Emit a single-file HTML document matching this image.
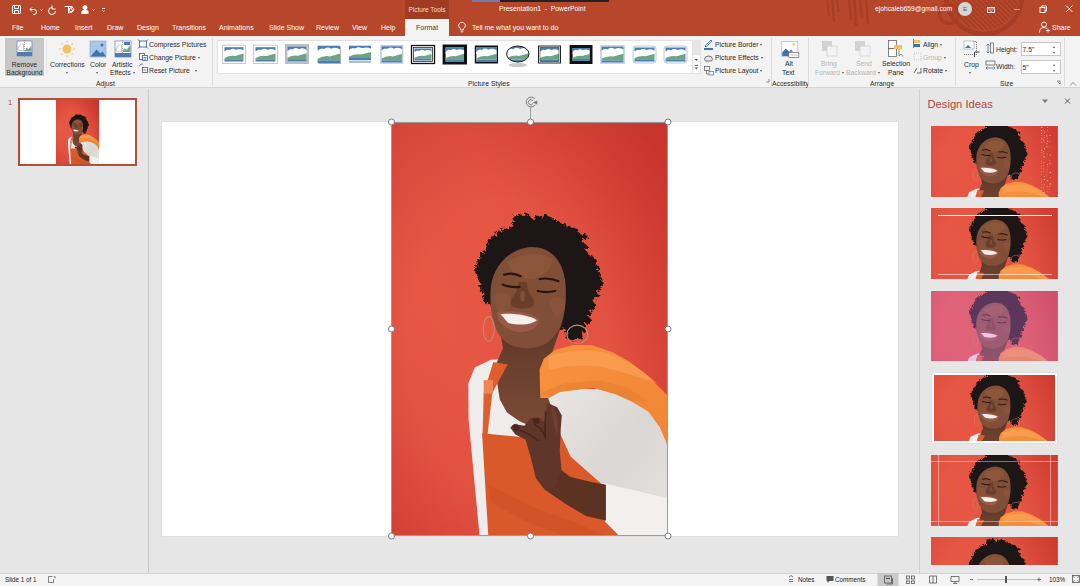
<!DOCTYPE html>
<html><head><meta charset="utf-8">
<style>
*{margin:0;padding:0;box-sizing:border-box}
html,body{width:1080px;height:586px;overflow:hidden;background:#E6E6E6;font-family:"Liberation Sans",sans-serif;font-size:7px;color:#262626}
.a{position:absolute}
.t{position:absolute;white-space:nowrap;line-height:1}
#title{left:0;top:0;width:1080px;height:36px;background:#B7472A}
#ribbon{left:0;top:36px;width:1080px;height:52px;background:#F3F3F3;border-bottom:1px solid #D5D5D5}
.tab{color:#fff;top:24px}
.rl{color:#2A2A2A;font-size:6.8px;margin-top:1px}
.sep{position:absolute;width:1px;background:#DADADA}
#status{left:0;top:573px;width:1080px;height:13px;background:#F3F3F3;border-top:1px solid #D4D4D4}
.dd{display:inline-block;width:0;height:0;border-left:1.6px solid transparent;border-right:1.6px solid transparent;border-top:2px solid #555;vertical-align:1px}
.du{display:inline-block;width:0;height:0;border-left:1.6px solid transparent;border-right:1.6px solid transparent;border-bottom:2px solid #555;vertical-align:1px}
</style></head><body>
<svg width="0" height="0" style="position:absolute">
<defs>
<radialGradient id="bg" cx="0.3" cy="0.5" r="0.85">
<stop offset="0" stop-color="#E95A47"/>
<stop offset="0.5" stop-color="#E14F3E"/>
<stop offset="1" stop-color="#C9382C"/>
</radialGradient>
<linearGradient id="bgr" x1="0" y1="1" x2="1" y2="0">
<stop offset="0" stop-color="#B01A1A" stop-opacity="0.15"/>
<stop offset="0.35" stop-color="#B01A1A" stop-opacity="0"/>
<stop offset="0.62" stop-color="#B01A1A" stop-opacity="0"/>
<stop offset="1" stop-color="#B01A1A" stop-opacity="0.3"/>
</linearGradient>
<filter id="fuzz" x="-10%" y="-10%" width="120%" height="120%">
<feTurbulence type="fractalNoise" baseFrequency="0.09" numOctaves="2" seed="4"/>
<feDisplacementMap in="SourceGraphic" scale="22"/>
</filter>
<radialGradient id="vig" cx="0.42" cy="0.55" r="0.72">
<stop offset="0.5" stop-color="#A81818" stop-opacity="0"/>
<stop offset="1" stop-color="#A81818" stop-opacity="0.3"/>
</radialGradient>
<linearGradient id="sleeve" x1="0" y1="0" x2="1" y2="1">
<stop offset="0" stop-color="#E9E7E5"/>
<stop offset="0.5" stop-color="#D9D6D3"/>
<stop offset="1" stop-color="#E6E4E2"/>
</linearGradient>
<linearGradient id="jacket" x1="0" y1="0" x2="1" y2="1">
<stop offset="0" stop-color="#F8923E"/>
<stop offset="1" stop-color="#F08434"/>
</linearGradient>
<linearGradient id="neck" x1="0" y1="0" x2="0" y2="1">
<stop offset="0" stop-color="#4F2C20"/>
<stop offset="0.4" stop-color="#683E2D"/>
<stop offset="1" stop-color="#7E4D38"/>
</linearGradient>
<g id="photo">
<rect x="-400" y="-400" width="1077" height="1214" fill="url(#bg)"/>
<rect x="0" y="0" width="277" height="414" fill="url(#bgr)"/>
<rect x="0" y="0" width="277" height="414" fill="url(#vig)"/>
<g transform="translate(59,78) scale(0.27315)">
<g fill="#1C1513" filter="url(#fuzz)"><polygon points="150,385 128,350 110,300 100,265 108,230 120,200 140,175 148,150 175,125 200,110 225,95 240,70 260,55 290,75 320,65 345,60 375,75 400,80 430,105 465,115 488,130 480,160 505,195 530,230 545,270 548,310 535,350 520,385 505,420 490,460 480,500 450,510 420,470 300,480 200,480"/><circle cx="148" cy="381" r="6"/><circle cx="134" cy="368" r="11"/><circle cx="129" cy="355" r="9"/><circle cx="116" cy="333" r="7"/><circle cx="113" cy="317" r="6"/><circle cx="114" cy="295" r="9"/><circle cx="107" cy="283" r="6"/><circle cx="101" cy="264" r="9"/><circle cx="99" cy="252" r="10"/><circle cx="107" cy="230" r="10"/><circle cx="115" cy="217" r="7"/><circle cx="121" cy="202" r="11"/><circle cx="125" cy="190" r="6"/><circle cx="141" cy="175" r="12"/><circle cx="151" cy="150" r="13"/><circle cx="160" cy="134" r="8"/><circle cx="177" cy="122" r="10"/><circle cx="200" cy="115" r="13"/><circle cx="222" cy="101" r="7"/><circle cx="240" cy="66" r="11"/><circle cx="256" cy="55" r="6"/><circle cx="281" cy="60" r="11"/><circle cx="288" cy="73" r="13"/><circle cx="321" cy="64" r="7"/><circle cx="350" cy="60" r="7"/><circle cx="355" cy="70" r="13"/><circle cx="372" cy="74" r="11"/><circle cx="394" cy="80" r="8"/><circle cx="416" cy="92" r="9"/><circle cx="433" cy="101" r="9"/><circle cx="446" cy="115" r="13"/><circle cx="460" cy="114" r="10"/><circle cx="493" cy="134" r="10"/><circle cx="482" cy="166" r="12"/><circle cx="498" cy="173" r="8"/><circle cx="501" cy="197" r="6"/><circle cx="517" cy="214" r="10"/><circle cx="527" cy="226" r="11"/><circle cx="539" cy="248" r="8"/><circle cx="547" cy="270" r="6"/><circle cx="546" cy="294" r="12"/><circle cx="547" cy="309" r="13"/><circle cx="543" cy="325" r="7"/><circle cx="541" cy="349" r="7"/><circle cx="526" cy="362" r="6"/><circle cx="521" cy="385" r="11"/><circle cx="514" cy="397" r="9"/><circle cx="506" cy="416" r="10"/><circle cx="503" cy="441" r="13"/><circle cx="485" cy="464" r="13"/><circle cx="485" cy="478" r="8"/><circle cx="475" cy="498" r="10"/><circle cx="450" cy="512" r="6"/><circle cx="436" cy="502" r="11"/><circle cx="426" cy="484" r="6"/></g>
</g>
<g transform="translate(64,208) scale(0.35833)">
<path fill="#EEEDEC" d="M70,590 L52,400 L38,250 L37,150 L55,105 L100,83 L160,80 L260,80 L260,590 Z"/>
<path fill="url(#neck)" d="M125,-80 L296,-80 L300,-22 L262,89 L296,257 L282,300 L215,270 L180,255 L145,230 L125,194 L117,143 L114,97 L134,51 L125,0 Z"/>
<path fill="#DE5E2E" d="M107,89 L147,96 L104,176 L91,290 L77,290 L80,176 Z"/>
<rect x="80" y="140" width="26" height="38" fill="#EE8558"/>
<path fill="url(#sleeve)" d="M255,175 L350,165 L450,165 L540,220 L590,280 L600,320 L600,590 L400,590 L405,530 L420,470 L350,420 L305,335 L285,260 Z"/>
<path fill="url(#jacket)" d="M238,190 L236,110 L248,80 L280,55 L330,42 L380,42 L440,62 L490,90 L540,130 L575,165 L600,190 L600,350 L592,320 L572,272 L540,228 L490,198 L450,180 L385,161 L330,168 L293,173 L262,190 Z"/>
<path fill="#FBAA60" opacity="0.5" d="M260,75 Q330,48 420,62 Q500,88 565,150 Q480,118 400,102 Q320,94 262,112 Z"/>
<path fill="#D8702A" opacity="0.3" d="M240,175 L300,150 L400,140 L480,160 L540,200 L490,198 L450,180 L385,161 L330,168 L293,173 L262,190 Z"/>
</g>
<g transform="translate(0,278) scale(0.25647)">
<path fill="#D9592B" d="M355,130 L520,145 L650,110 L700,220 L830,335 L835,470 L900,540 L380,540 Z"/>
<path fill="#C24A22" opacity="0.35" d="M380,330 L560,420 L700,470 L860,540 L700,540 L520,470 L390,400 Z"/>
<path fill="#F1F0EE" d="M830,325 L960,355 L1085,385 L1085,545 L905,545 L835,475 Z"/>
<path fill="#5C3222" d="M660,270 L700,300 L780,320 L838,330 L838,470 L760,452 L680,405 L600,350 L565,300 Z"/>
<path fill="#61362A" d="M610,12 L648,28 L666,60 L662,110 L658,200 L665,275 L640,340 L600,350 L565,305 L545,225 L525,155 L485,135 L465,108 L480,94 L520,100 L545,70 L578,68 L600,88 L603,40 Z"/>
<path fill="#3A1E16" opacity="0.6" d="M470,100 L490,92 L505,110 L485,125 Z M550,72 L575,70 L580,90 L558,95 Z"/>
<path fill="none" stroke="#3A1E16" stroke-width="6" opacity="0.7" d="M603,45 Q598,95 602,150 M500,118 Q540,130 575,160 M560,95 Q590,110 600,140"/>
<path fill="#7A4A36" opacity="0.5" d="M625,30 Q645,40 650,80 L648,140 Q635,100 628,60 Z"/>
</g>
<g transform="translate(59,78) scale(0.27315)">
<path fill="#814E38" d="M148,340 C150,250 210,178 298,172 C382,172 424,240 424,330 C426,420 408,485 360,520 C322,548 252,552 207,522 C165,492 146,425 148,340 Z"/>
<path fill="#98623F" opacity="0.45" d="M210,225 Q300,175 375,215 Q370,270 300,290 Q230,290 210,225 Z"/>
<path fill="#935A40" opacity="0.4" d="M160,350 Q190,330 220,350 Q230,400 195,425 Q165,410 160,350 Z M365,365 Q395,345 422,365 Q425,410 395,430 Q365,410 365,365 Z"/>
<path fill="#5E3424" opacity="0.6" d="M250,300 Q246,340 226,360 Q212,386 240,394 Q266,402 292,394 Q316,386 304,360 Q284,340 280,300 Z"/>
<ellipse cx="266" cy="352" rx="9" ry="20" fill="#A06548" opacity="0.45"/>
<path fill="#9A5A48" d="M172,410 C230,402 292,410 328,436 C315,492 230,505 178,442 Z"/>
<path fill="#F4F0EA" d="M185,418 C230,414 285,420 318,440 C300,455 258,462 213,450 Z"/>
<path fill="none" stroke="#2A1510" stroke-width="8" d="M190,308 Q222,322 258,318 M318,332 Q352,342 388,332 M195,275 Q225,262 262,280 M325,290 Q360,282 400,298"/>
<ellipse cx="142" cy="472" rx="20" ry="45" fill="none" stroke="#B8906E" stroke-width="4"/>
<ellipse cx="466" cy="492" rx="38" ry="34" fill="none" stroke="#B8906E" stroke-width="4"/>
</g>
</g>
</defs>
</svg>
<div id="title" class="a">
<svg class="a" style="left:0;top:0" width="1080" height="36">
<defs><clipPath id="ringclip"><circle cx="984" cy="-4" r="34"/></clipPath></defs>
<g fill="#A63D24"><path d="M826,0 l2,0 l2,16 l-2,0 z"/><path d="M831,0 l2,0 l2,22 l-2,0 z"/><path d="M836,0 l1.8,0 l2,12 l-1.8,0 z"/><path d="M848,0 l2.2,0 l2,20 l-2.2,0 z"/><path d="M853,0 l2.5,0 l2,26 l-2.5,0 z"/><path d="M859,0 l2,0 l2,18 l-2,0 z"/><path d="M865,0 l2,0 l2,24 l-2,0 z"/></g>
<g fill="none" stroke="#A63D24">
<circle cx="984" cy="-4" r="38" stroke-width="4.5"/>
<circle cx="949" cy="14" r="9.5" stroke-width="3"/>
<path d="M894,-44 l80,80 M899,-44 l80,80 M904,-44 l80,80 M909,-44 l80,80 M914,-44 l80,80 M919,-44 l80,80 M924,-44 l80,80 M929,-44 l80,80 M934,-44 l80,80 M939,-44 l80,80 M944,-44 l80,80 M949,-44 l80,80 M954,-44 l80,80 M959,-44 l80,80 M964,-44 l80,80 M969,-44 l80,80 M974,-44 l80,80 M979,-44 l80,80 M984,-44 l80,80 M989,-44 l80,80 M994,-44 l80,80 " stroke-width="1.6" clip-path="url(#ringclip)"/>
</g>
</svg>
<div class="a" style="left:472px;top:0;width:28px;height:1.5px;background:#6D7FA8"></div>
<div class="a" style="left:500px;top:0;width:109px;height:1.5px;background:#222"></div>
<!-- QAT icons -->
<svg class="a" style="left:10px;top:4px" width="110" height="11" fill="none" stroke="#fff" stroke-width="1">
<rect x="2.5" y="1.5" width="8" height="8" rx="0.5"/>
<path d="M4.5,1.5 v3 h4 v-3 M4.5,9.5 v-3 h4 v3"/>
<path d="M22,3.5 l-2,2 l2,2 M20,5.5 h4 a2.5,2.5 0 0 1 0,5 h-1"/>
<path d="M30.5,5.5 l1,1 l1,-1" stroke-width="0.8"/>
<path d="M42,3.5 a3.5,3.5 0 1 0 3.5,3.5 M42,1.5 v3.5 h3.5" />
<path d="M54.5,2.5 h8 M58.5,2.5 v7 M59.5,5.5 a2.2,2.2 0 1 1 0,0.1"/>
<circle cx="60.5" cy="6.5" r="2"/>
<circle cx="75" cy="3.5" r="2" fill="#fff"/>
<path d="M72,10 v-3 q3,-2 6,0 v3" fill="#fff"/>
<path d="M82.5,5.5 l1,1 l1,-1" stroke-width="0.8"/>
<path d="M92,4.5 h3 M92.5,6.5 l1,1 l1,-1" stroke-width="0.8"/>
</svg>
<div class="a" style="left:405px;top:0;width:44px;height:19px;background:#A03C23"></div>
<div class="t" style="left:405px;top:6.8px;width:44px;text-align:center;color:#F3DDD6;font-size:6.5px">Picture Tools</div>
<div class="t" style="left:499px;top:6.3px;color:#fff;font-size:6.8px">Presentation1&nbsp; -&nbsp; PowerPoint</div>
<div class="t" style="left:875px;top:6px;color:#fff;font-size:6.7px">ejohcaleb659@gmail.com</div>
<div class="a" style="left:958px;top:2px;width:14px;height:14px;border-radius:50%;background:#D6D6D6"></div>
<div class="t" style="left:963px;top:6px;color:#555;font-size:6px">E</div>
<svg class="a" style="left:980px;top:2px" width="100" height="34" fill="none" stroke="#fff" stroke-width="0.9">
<rect x="7.5" y="5.5" width="7" height="5"/>
<path d="M7.5,7 h7 M9.5,8.5 l1.5,1 l1.5,-1" stroke-width="0.7"/>
<path d="M34,7.5 h6" stroke="#E8B8A8" stroke-width="0.7"/>
<rect x="60" y="5.5" width="5" height="5"/>
<path d="M61.5,5.5 v-1.5 h5 v5 h-1.5"/>
<path d="M86,3.5 l6.5,6.5 M92.5,3.5 l-6.5,6.5"/>
<circle cx="64" cy="22.5" r="2.5"/>
<path d="M59.5,30.5 q0,-5 4.5,-5 q2,0 3,1 M66,28.5 h4 M68,26.5 v4"/>
</svg>
<div class="t" style="left:1052px;top:24px;color:#fff;font-size:7px">Share</div>
<!-- tabs -->
<div class="t tab" style="left:12px">File</div>
<div class="t tab" style="left:41px">Home</div>
<div class="t tab" style="left:75px">Insert</div>
<div class="t tab" style="left:107px">Draw</div>
<div class="t tab" style="left:137px">Design</div>
<div class="t tab" style="left:172px">Transitions</div>
<div class="t tab" style="left:219px">Animations</div>
<div class="t tab" style="left:269px">Slide Show</div>
<div class="t tab" style="left:316px">Review</div>
<div class="t tab" style="left:352px">View</div>
<div class="t tab" style="left:381px">Help</div>
<div class="a" style="left:405px;top:19px;width:44px;height:18px;background:#F3F3F3"></div>
<div class="t" style="left:416px;top:24px;color:#3A3A3A">Format</div>
<svg class="a" style="left:457px;top:22px" width="10" height="11" fill="none" stroke="#fff" stroke-width="0.9">
<path d="M3.5,8 v-1.5 a3.3,3.3 0 1 1 3,0 v1.5 z M3.8,9.8 h2.4"/>
</svg>
<div class="t tab" style="left:472px">Tell me what you want to do</div>
</div>
<div id="ribbon" class="a"></div>
<!-- Adjust group -->
<div class="sep" style="left:46px;top:40px;height:34px;background:#E4E4E4"></div>
<div class="a" style="left:5px;top:38px;width:39px;height:38px;background:#C6C6C6"></div>
<svg class="a" style="left:0;top:36px" width="212" height="52">
<g>
<rect x="17" y="5" width="15" height="15" fill="#fff" stroke="#6B8FBF" stroke-width="0.8"/>
<rect x="17" y="16" width="15" height="4" fill="#4C7DB4"/>
<path d="M17.5,14 q2,-7 6,-6 v7 z" fill="#fff" stroke="#888" stroke-width="0.5"/>
<path d="M24.5,15.5 l2,-4 l2,2 l3,-4 v6 z" fill="#6FA386"/>
<path d="M24.5,4 v17" stroke="#777" stroke-width="0.6" stroke-dasharray="1,1"/>
</g>
<g fill="#F2C261">
<circle cx="67" cy="13" r="4.5"/>
<g stroke="#F2C261" stroke-width="1.3" stroke-linecap="round">
<path d="M67,5.5 v0.5 M67,20 v0.5 M59.5,13 h0.5 M74,13 h0.5 M61.7,7.7 l0.3,0.3 M72,18 l0.3,0.3 M61.7,18.3 l0.3,-0.3 M72,8 l0.3,-0.3"/>
</g>
</g>
<g>
<rect x="90" y="5" width="16" height="16" fill="#A9C6E8" stroke="#7FA3CF" stroke-width="0.6"/>
<path d="M90.5,20.5 l6,-7 l4,4 l2,-2 l3.5,5 z" fill="#3F73B0"/>
<circle cx="102" cy="9" r="1.5" fill="#3F73B0"/>
</g>
<g>
<rect x="115" y="5" width="16" height="16" fill="#fff" stroke="#6B8FBF" stroke-width="0.8"/>
<rect x="115" y="17" width="16" height="4" fill="#4C7DB4"/>
<path d="M115.5,15 q2,-7 6,-6 v7 z" fill="#fff" stroke="#888" stroke-width="0.5"/>
<path d="M122.5,16 l2,-4 l2,2 l4,-5 v7 z" fill="#6FA386"/>
<rect x="124" y="6" width="6" height="3" fill="#4C7DB4"/>
<path d="M122.5,4 v18" stroke="#777" stroke-width="0.6" stroke-dasharray="1,1"/>
</g>
<g fill="none" stroke="#3A5F8F" stroke-width="0.8">
<rect x="139.5" y="5" width="7" height="6"/>
<path d="M138,3.5 l2,2 M148,3.5 l-2,2 M138,12.5 l2,-2 M148,12.5 l-2,-2"/>
<rect x="139.5" y="17.5" width="5" height="6" stroke="#555"/>
<rect x="142.5" y="19.5" width="5" height="5" fill="#fff"/>
<path d="M143.5,21.5 h3 M143.5,23 h3" stroke="#3F73B0"/>
<path d="M139.5,30 q0,-2 2.5,-2 h1" stroke="#3F73B0"/>
<rect x="142.5" y="31.5" width="5" height="5" fill="#fff" stroke="#555"/>
<path d="M143.5,34 h3"/>
</g>
</svg>
<div class="t rl" style="left:5px;top:60.5px;width:39px;text-align:center">Remove</div>
<div class="t rl" style="left:3px;top:68.5px;width:43px;text-align:center">Background</div>
<div class="t rl" style="left:50px;top:60.5px">Corrections</div>
<div class="t rl" style="left:65.5px;top:69px"><i class="dd"></i></div>
<div class="t rl" style="left:90px;top:60.5px">Color</div>
<div class="t rl" style="left:96px;top:69px"><i class="dd"></i></div>
<div class="t rl" style="left:112px;top:60.5px">Artistic</div>
<div class="t rl" style="left:110px;top:68.5px">Effects <i class="dd"></i></div>
<div class="t rl" style="left:149px;top:40.5px">Compress Pictures</div>
<div class="t rl" style="left:149px;top:53.5px">Change Picture <i class="dd"></i></div>
<div class="t rl" style="left:149px;top:66.5px">Reset Picture&nbsp;&nbsp; <i class="dd"></i></div>
<div class="t rl" style="left:96px;top:80px">Adjust</div>
<div class="sep" style="left:212px;top:38px;height:48px"></div>
<!-- Picture styles -->
<div class="a" style="left:217px;top:39.5px;width:484px;height:34px;background:#FFFFFF;border:1px solid #E1E1E1"></div>
<div class="a" style="left:692px;top:40px;width:8.5px;height:15px;background:#E6E6E6"></div>
<div class="a" style="left:692px;top:40px;width:1px;height:33px;background:#E1E1E1"></div>
<svg class="a" style="left:692px;top:39px" width="10" height="36"><path d="M2.6,20 h3.4 l-1.7,2 z" fill="#555"/><path d="M2.6,26.5 h3.4" stroke="#555" stroke-width="0.8"/><path d="M2.6,28.5 h3.4 l-1.7,2 z" fill="#555"/><path d="M0.5,16 h8 M0.5,25 h8" stroke="#E4E4E4" stroke-width="0.6"/></svg>

<svg class="a" style="left:0;top:0" width="1080" height="90"><rect x="222.5" y="45.2" width="23" height="18.299999999999997" fill="#fff" stroke="#C8C8C8"/><g><rect x="224.5" y="47.2" width="19.0" height="14.299999999999997" fill="#FFFFFF"/><rect x="224.5" y="47.2" width="19.0" height="4.0" fill="#4C7DB4"/><path d="M224.5,52.1 Q226.8,48.3 229.8,50.1 Q232.5,47.5 235.9,49.8 Q239.7,47.8 243.5,50.3 L243.5,53.6 L224.5,53.6 Z" fill="#fff"/><path d="M224.5,57.9 Q230.2,55.1 234.9,56.1 L243.5,53.6 L243.5,59.4 L224.5,59.4 Z" fill="#6FA386"/><rect x="224.5" y="59.4" width="19.0" height="2.1" fill="#4C7DB4"/></g><rect x="253.5" y="45.2" width="24" height="18.299999999999997" fill="#fff" stroke="#C8C8C8"/><g><rect x="255.5" y="47.2" width="20.0" height="14.299999999999997" fill="#FFFFFF"/><rect x="255.5" y="47.2" width="20.0" height="4.0" fill="#4C7DB4"/><path d="M255.5,52.1 Q257.9,48.3 261.1,50.1 Q263.9,47.5 267.5,49.8 Q271.5,47.8 275.5,50.3 L275.5,53.6 L255.5,53.6 Z" fill="#fff"/><path d="M255.5,57.9 Q261.5,55.1 266.5,56.1 L275.5,53.6 L275.5,59.4 L255.5,59.4 Z" fill="#6FA386"/><rect x="255.5" y="59.4" width="20.0" height="2.1" fill="#4C7DB4"/></g><rect x="285" y="44" width="24" height="20" fill="#BEBEBE"/><g><rect x="287.5" y="46.5" width="19.0" height="15.0" fill="#FFFFFF"/><rect x="287.5" y="46.5" width="19.0" height="4.2" fill="#4C7DB4"/><path d="M287.5,51.6 Q289.8,47.7 292.8,49.5 Q295.5,46.7 298.9,49.2 Q302.7,47.0 306.5,49.8 L306.5,53.3 L287.5,53.3 Z" fill="#fff"/><path d="M287.5,57.8 Q293.2,54.8 297.9,55.8 L306.5,53.2 L306.5,59.2 L287.5,59.2 Z" fill="#6FA386"/><rect x="287.5" y="59.2" width="19.0" height="2.2" fill="#4C7DB4"/></g><rect x="318.6" y="46.7" width="22.399999999999977" height="17.299999999999997" fill="#B0B0B0"/><g><rect x="317.6" y="45.7" width="22.399999999999977" height="17.299999999999997" fill="#FFFFFF"/><rect x="317.6" y="45.7" width="22.399999999999977" height="4.8" fill="#4C7DB4"/><path d="M317.6,51.5 Q320.3,47.1 323.9,49.1 Q327.1,46.1 331.1,48.8 Q335.6,46.4 340.1,49.5 L340.1,53.4 L317.6,53.4 Z" fill="#fff"/><path d="M317.6,58.7 Q324.3,55.2 329.9,56.4 L340,53.5 L340,60.4 L317.6,60.4 Z" fill="#6FA386"/><rect x="317.6" y="60.4" width="22.399999999999977" height="2.6" fill="#4C7DB4"/></g><g><rect x="349" y="45.7" width="22" height="14.299999999999997" fill="#FFFFFF"/><rect x="349" y="45.7" width="22" height="4.0" fill="#4C7DB4"/><path d="M349.0,50.6 Q351.6,46.8 355.2,48.6 Q358.2,46.0 362.2,48.3 Q366.6,46.3 371.0,48.8 L371.0,52.1 L349.0,52.1 Z" fill="#fff"/><path d="M349,56.4 Q355.6,53.6 361.1,54.6 L371,52.1 L371,57.9 L349,57.9 Z" fill="#6FA386"/><rect x="349" y="57.9" width="22" height="2.1" fill="#4C7DB4"/></g><rect x="349" y="60.5" width="22" height="2.5" fill="#A9BFD9"/><g><rect x="381" y="45.7" width="21.600000000000023" height="17.299999999999997" fill="#FFFFFF"/><rect x="381" y="45.7" width="21.600000000000023" height="4.8" fill="#4C7DB4"/><path d="M381.0,51.5 Q383.6,47.1 387.0,49.1 Q390.0,46.1 393.9,48.8 Q398.2,46.4 402.5,49.5 L402.5,53.4 L381.0,53.4 Z" fill="#fff"/><path d="M381,58.7 Q387.5,55.2 392.9,56.4 L402.6,53.5 L402.6,60.4 L381,60.4 Z" fill="#6FA386"/><rect x="381" y="60.4" width="21.600000000000023" height="2.6" fill="#4C7DB4"/></g><rect x="381" y="45.7" width="21.600000000000023" height="17.299999999999997" fill="none" stroke="#B8CBE0" stroke-width="1.5"/><rect x="411.5" y="45.5" width="23" height="18" fill="#fff" stroke="#111" stroke-width="1.3"/><rect x="413.5" y="47.5" width="19" height="14" fill="#fff" stroke="#111" stroke-width="0.7"/><g><rect x="414.5" y="48.5" width="17.0" height="12.0" fill="#FFFFFF"/><rect x="414.5" y="48.5" width="17.0" height="3.4" fill="#4C7DB4"/><path d="M414.5,52.6 Q416.5,49.5 419.3,50.9 Q421.6,48.7 424.7,50.7 Q428.1,49.0 431.5,51.2 L431.5,54.0 L414.5,54.0 Z" fill="#fff"/><path d="M414.5,57.5 Q419.6,55.1 423.9,55.9 L431.5,53.9 L431.5,58.7 L414.5,58.7 Z" fill="#6FA386"/><rect x="414.5" y="58.7" width="17.0" height="1.8" fill="#4C7DB4"/></g><rect x="442.6" y="44.5" width="24.399999999999977" height="20.0" fill="#111"/><g><rect x="445.6" y="47.5" width="18.399999999999977" height="14.0" fill="#FFFFFF"/><rect x="445.6" y="47.5" width="18.399999999999977" height="3.9" fill="#4C7DB4"/><path d="M445.6,52.2 Q447.8,48.6 450.8,50.3 Q453.4,47.8 456.7,50.0 Q460.4,48.1 464.1,50.6 L464.1,53.8 L445.6,53.8 Z" fill="#fff"/><path d="M445.6,58.0 Q451.1,55.2 455.7,56.2 L464,53.8 L464,59.4 L445.6,59.4 Z" fill="#6FA386"/><rect x="445.6" y="59.4" width="18.399999999999977" height="2.1" fill="#4C7DB4"/></g><rect x="474.8" y="45.5" width="23.19999999999999" height="18.0" fill="#111"/><g><rect x="476.3" y="47.0" width="20.19999999999999" height="15.0" fill="#FFFFFF"/><rect x="476.3" y="47.0" width="20.19999999999999" height="4.2" fill="#4C7DB4"/><path d="M476.3,52.1 Q478.7,48.2 482.0,50.0 Q484.8,47.4 488.4,49.7 Q492.5,47.7 496.5,50.3 L496.5,53.7 L476.3,53.7 Z" fill="#fff"/><path d="M476.3,58.2 Q482.4,55.2 487.4,56.3 L496.5,53.8 L496.5,59.8 L476.3,59.8 Z" fill="#6FA386"/><rect x="476.3" y="59.8" width="20.19999999999999" height="2.2" fill="#4C7DB4"/></g><ellipse cx="517.8" cy="65" rx="9.199999999999989" ry="2" fill="#C8C8C8"/><clipPath id="ec"><ellipse cx="517.8" cy="54.0" rx="11.199999999999989" ry="8.0"/></clipPath><g clip-path="url(#ec)"><g><rect x="506.6" y="46" width="22.399999999999977" height="16" fill="#FFFFFF"/><rect x="506.6" y="46" width="22.399999999999977" height="4.5" fill="#4C7DB4"/><path d="M506.6,51.5 Q509.3,47.3 512.9,49.2 Q516.1,46.3 520.1,48.9 Q524.6,46.6 529.1,49.5 L529.1,53.2 L506.6,53.2 Z" fill="#fff"/><path d="M506.6,58.0 Q513.3,54.8 518.9,55.9 L529,53.2 L529,59.6 L506.6,59.6 Z" fill="#6FA386"/><rect x="506.6" y="59.6" width="22.399999999999977" height="2.4" fill="#4C7DB4"/></g></g><ellipse cx="517.8" cy="54.0" rx="11.199999999999989" ry="8.0" fill="none" stroke="#222" stroke-width="1"/><rect x="538.5" y="46.0" width="22" height="17.0" fill="#fff" stroke="#222" stroke-width="1"/><g><rect x="540" y="47.5" width="19" height="14.0" fill="#FFFFFF"/><rect x="540" y="47.5" width="19" height="3.9" fill="#4C7DB4"/><path d="M540.0,52.2 Q542.3,48.6 545.3,50.3 Q548.0,47.8 551.4,50.0 Q555.2,48.1 559.0,50.6 L559.0,53.8 L540.0,53.8 Z" fill="#fff"/><path d="M540,58.0 Q545.7,55.2 550.5,56.2 L559,53.8 L559,59.4 L540,59.4 Z" fill="#6FA386"/><rect x="540" y="59.4" width="19" height="2.1" fill="#4C7DB4"/></g><rect x="540" y="47.5" width="19" height="14.0" fill="none" stroke="#333" stroke-width="0.6"/><rect x="569.6" y="45" width="22.899999999999977" height="19" fill="#111"/><g><rect x="572.6" y="48" width="16.899999999999977" height="13" fill="#FFFFFF"/><rect x="572.6" y="48" width="16.899999999999977" height="3.6" fill="#4C7DB4"/><path d="M572.6,52.4 Q574.6,49.0 577.4,50.6 Q579.7,48.2 582.8,50.3 Q586.2,48.5 589.6,50.8 L589.6,53.8 L572.6,53.8 Z" fill="#fff"/><path d="M572.6,57.8 Q577.7,55.1 581.9,56.1 L589.5,53.9 L589.5,59.0 L572.6,59.0 Z" fill="#6FA386"/><rect x="572.6" y="59.0" width="16.899999999999977" height="1.9" fill="#4C7DB4"/></g><g><rect x="601" y="46" width="23" height="17" fill="#FFFFFF"/><rect x="601" y="46" width="23" height="4.8" fill="#4C7DB4"/><path d="M601.0,51.8 Q603.8,47.4 607.4,49.4 Q610.7,46.4 614.8,49.1 Q619.4,46.7 624.0,49.8 L624.0,53.7 L601.0,53.7 Z" fill="#fff"/><path d="M601,58.8 Q607.9,55.4 613.6,56.5 L624,53.6 L624,60.5 L601,60.5 Z" fill="#6FA386"/><rect x="601" y="60.5" width="23" height="2.5" fill="#4C7DB4"/></g><rect x="601" y="46" width="23" height="17" fill="none" stroke="#B8CBE0" stroke-width="1.5"/><rect x="633" y="46" width="23" height="17" rx="3" fill="#fff" stroke="#B8C8DA" stroke-width="1"/><g><rect x="634.5" y="47.5" width="20.0" height="14.0" fill="#FFFFFF"/><rect x="634.5" y="47.5" width="20.0" height="3.9" fill="#4C7DB4"/><path d="M634.5,52.2 Q636.9,48.6 640.1,50.3 Q642.9,47.8 646.5,50.0 Q650.5,48.1 654.5,50.6 L654.5,53.8 L634.5,53.8 Z" fill="#fff"/><path d="M634.5,58.0 Q640.5,55.2 645.5,56.2 L654.5,53.8 L654.5,59.4 L634.5,59.4 Z" fill="#6FA386"/><rect x="634.5" y="59.4" width="20.0" height="2.1" fill="#4C7DB4"/></g><rect x="664" y="46" width="23" height="17" rx="3" fill="#fff" stroke="#B8C8DA" stroke-width="1"/><g><rect x="665.5" y="47.5" width="20.0" height="14.0" fill="#FFFFFF"/><rect x="665.5" y="47.5" width="20.0" height="3.9" fill="#4C7DB4"/><path d="M665.5,52.2 Q667.9,48.6 671.1,50.3 Q673.9,47.8 677.5,50.0 Q681.5,48.1 685.5,50.6 L685.5,53.8 L665.5,53.8 Z" fill="#fff"/><path d="M665.5,58.0 Q671.5,55.2 676.5,56.2 L685.5,53.8 L685.5,59.4 L665.5,59.4 Z" fill="#6FA386"/><rect x="665.5" y="59.4" width="20.0" height="2.1" fill="#4C7DB4"/></g></svg>
<div class="t rl" style="left:468px;top:80px">Picture Styles</div>
<svg class="a" style="left:700px;top:36px" width="110" height="52" fill="none" stroke-width="0.9">
<path d="M5,10 l6,-6 l1,1 l-6,6 z" stroke="#3F73B0"/>
<rect x="4" y="12" width="9" height="2" fill="#3F73B0" stroke="none"/>
<path d="M4.5,23.5 a4,3.5 0 1 1 8,0 l-1,1.5 h-6 z" stroke="#555" stroke-width="0.8" fill="#E6E6E6"/>
<rect x="4.5" y="30.5" width="5" height="4" stroke="#555" stroke-width="0.7"/>
<path d="M6.5,34.5 v3.5 h2" stroke="#555" stroke-width="0.7"/>
<rect x="9" y="35.5" width="4.5" height="3.5" stroke="#3F73B0" stroke-width="0.7"/>
<path d="M66,46 h3 v-3" stroke="#666" stroke-width="0.7"/>
</svg>
<div class="t rl" style="left:715px;top:40.5px">Picture Border <i class="dd"></i></div>
<div class="t rl" style="left:715px;top:53.5px">Picture Effects <i class="dd"></i></div>
<div class="t rl" style="left:715px;top:66.5px">Picture Layout <i class="dd"></i></div>
<div class="sep" style="left:771px;top:38px;height:48px"></div>
<svg class="a" style="left:780px;top:36px" width="24" height="24">
<rect x="1.8" y="5.5" width="16" height="15" fill="#fff" stroke="#AAA" stroke-width="0.6"/>
<path d="M2.2,20 v-3.5 l3.5,-4 l3.5,3 v4.5 z" fill="#3F73B0"/>
<path d="M9,16 l2,-2.5 l2,2 z" fill="#3F73B0"/>
<circle cx="13.8" cy="8.5" r="1.3" fill="#E3C66A"/>
<rect x="8.8" y="16.6" width="10" height="5" fill="#fff" stroke="#666" stroke-width="0.7"/>
<path d="M10.5,19.1 h6.5" stroke="#999" stroke-width="0.6"/>
</svg>
<div class="t rl" style="left:785px;top:59.5px">Alt</div>
<div class="t rl" style="left:782px;top:68.5px">Text</div>
<div class="t rl" style="left:772px;top:80px">Accessibility</div>
<div class="sep" style="left:808px;top:38px;height:48px"></div>
<!-- Arrange -->
<svg class="a" style="left:810px;top:36px" width="144" height="52">
<rect x="12" y="5" width="10" height="10" fill="#D2D2D2"/>
<rect x="17" y="10" width="10" height="10" fill="#F3F3F3" stroke="#CFCFCF" stroke-width="0.7"/>
<rect x="45" y="5" width="10" height="10" fill="#D2D2D2"/>
<rect x="50" y="10" width="10" height="10" fill="#F3F3F3" stroke="#CFCFCF" stroke-width="0.7"/>
<rect x="78.5" y="4.5" width="8" height="8" fill="#fff" stroke="#555" stroke-width="0.7"/>
<rect x="78.5" y="12.5" width="8" height="8" fill="#fff" stroke="#555" stroke-width="0.7"/>
<rect x="84" y="9" width="8" height="4" fill="#F2C261"/>
<path d="M89,13 v7 l2,-2 l2,2.5" fill="#fff" stroke="#444" stroke-width="0.6"/>
<rect x="104" y="4" width="6" height="3" fill="#F2C261"/>
<rect x="104" y="8" width="6" height="3" fill="#3F73B0"/>
<path d="M103.5,3 v9" stroke="#444" stroke-width="0.7"/>
<rect x="104" y="17" width="7" height="7" fill="none" stroke="#BBB" stroke-width="0.7" stroke-dasharray="1,1"/>
<path d="M104,37 l3,-5 M107,37 h4 v-5" stroke="#444" fill="none" stroke-width="0.8"/>
</svg>
<div class="t rl" style="left:821px;top:60px;color:#B5B5B5">Bring</div>
<div class="t rl" style="left:815px;top:68.5px;color:#B5B5B5">Forward <i class="dd"></i></div>
<div class="t rl" style="left:856px;top:60px;color:#B5B5B5">Send</div>
<div class="t rl" style="left:846px;top:68.5px;color:#B5B5B5">Backward <i class="dd"></i></div>
<div class="t rl" style="left:882px;top:60px">Selection</div>
<div class="t rl" style="left:888px;top:68.5px">Pane</div>
<div class="t rl" style="left:923px;top:41px">Align <i class="dd"></i></div>
<div class="t rl" style="left:923px;top:54px;color:#B5B5B5">Group <i class="dd"></i></div>
<div class="t rl" style="left:923px;top:67px">Rotate <i class="dd"></i></div>
<div class="t rl" style="left:870px;top:80px">Arrange</div>
<div class="sep" style="left:955px;top:38px;height:48px"></div>
<!-- Size -->
<svg class="a" style="left:960px;top:36px" width="104" height="52">
<rect x="4" y="5" width="10" height="8" fill="#fff" stroke="#7FA3CF" stroke-width="0.6"/>
<path d="M5,12 l3,-3 l3,3 z" fill="#3F73B0"/>
<path d="M4,18.5 h12.5 v-13 h-3" fill="none" stroke="#555" stroke-width="0.7" stroke-dasharray="1.2,0.8"/>
<path d="M14.5,21 v-5 h5" fill="none" stroke="#333" stroke-width="0.9"/>
<path d="M28,8 v9 M26.5,9.5 l1.5,-1.5 l1.5,1.5 M26.5,15.5 l1.5,1.5 l1.5,-1.5" fill="none" stroke="#3F73B0" stroke-width="0.8"/>
<rect x="30.5" y="7" width="3" height="10" fill="none" stroke="#555" stroke-width="0.7"/>
<rect x="26" y="25" width="9" height="4" fill="none" stroke="#555" stroke-width="0.7"/>
<path d="M26,32 h9 M27.5,30.5 l-1.5,1.5 l1.5,1.5 M33.5,30.5 l1.5,1.5 l-1.5,1.5" fill="none" stroke="#3F73B0" stroke-width="0.8"/>
</svg>
<div class="t rl" style="left:964px;top:60.5px">Crop</div>
<div class="t rl" style="left:969px;top:69px"><i class="dd"></i></div>
<div class="t rl" style="left:996px;top:45.5px">Height:</div>
<div class="t rl" style="left:996px;top:63px">Width:</div>
<div class="a" style="left:1020.5px;top:42px;width:40px;height:13.5px;background:#fff;border:1px solid #C6C6C6"></div>
<div class="a" style="left:1020.5px;top:60px;width:40px;height:13.5px;background:#fff;border:1px solid #C6C6C6"></div>
<div class="t rl" style="left:1022.5px;top:45.5px">7.5"</div>
<div class="t rl" style="left:1022.5px;top:63.5px">5"</div>
<div class="t rl" style="left:1053px;top:43px"><i class="du"></i></div>
<div class="t rl" style="left:1053px;top:49px"><i class="dd"></i></div>
<div class="t rl" style="left:1053px;top:61px"><i class="du"></i></div>
<div class="t rl" style="left:1053px;top:67px"><i class="dd"></i></div>
<div class="t rl" style="left:1000px;top:80px">Size</div>
<svg class="a" style="left:1055px;top:79px" width="25" height="9" fill="none" stroke="#666" stroke-width="0.7">
<path d="M2,2 h3 v3 M2.5,2.5 l2.5,2.5" />
<path d="M15,6.5 l3,-3 l3,3"/>
</svg>
<div class="sep" style="left:1064px;top:38px;height:48px"></div>
<!-- left panel separator -->
<div class="a" style="left:148px;top:89px;width:1px;height:484px;background:#C8C8C8"></div>
<!-- slide thumbnail -->
<div class="t" style="left:8px;top:98.5px;color:#A8503C;font-size:7.5px">1</div>
<div class="a" style="left:18px;top:97.5px;width:118.5px;height:68px;border:2px solid #B24E3A;background:#fff"></div>
<svg class="a" style="left:56px;top:99.5px" width="43" height="64" viewBox="0 0 277 414" preserveAspectRatio="none"><use href="#photo"/></svg>
<!-- slide -->
<div class="a" style="left:162px;top:122px;width:736px;height:414px;background:#fff;box-shadow:0 0 1px #bbb"></div>
<svg class="a" style="left:391px;top:122px" width="277" height="414" viewBox="0 0 277 414"><use href="#photo"/></svg>
<div class="a" style="left:391px;top:122px;width:277px;height:414px;border:0.5px solid #9a9a9a"></div>
<svg class="a" style="left:380px;top:92px" width="300" height="456">
<path d="M150.5,15.5 V30" stroke="#8A8A8A" stroke-width="0.8"/>
<g fill="none" stroke="#7C7C7C" stroke-width="1">
<path d="M154.8,6.8 A4.9,4.9 0 1 0 155.2,12.8"/>
<path d="M152.8,8.6 A2.5,2.5 0 1 0 153,11.6"/>
<path d="M152.6,10.6 L157.2,12.6 L157.4,8.4 Z" fill="#7C7C7C" stroke="none"/>
</g>
<g fill="#fff" stroke="#7A7A7A" stroke-width="1">
<circle cx="11.5" cy="30" r="3"/>
<circle cx="150.5" cy="30" r="3"/>
<circle cx="288" cy="30" r="3"/>
<circle cx="11.5" cy="237" r="3"/>
<circle cx="288" cy="237" r="3"/>
<circle cx="11.5" cy="444" r="3"/>
<circle cx="150.5" cy="444" r="3"/>
<circle cx="288" cy="444" r="3"/>
</g>
</svg>
<!-- design pane -->
<div class="t" style="left:927.5px;top:98.7px;color:#B0463E;font-size:11.2px">Design Ideas</div>
<svg class="a" style="left:1038px;top:96px" width="40" height="12">
<path d="M4,3.5 h6 l-3,3.5 z" fill="#7A7A7A"/>
<path d="M27,2.5 l5,5 M32,2.5 l-5,5" stroke="#555" stroke-width="1"/>
</svg>
<div class="a" style="left:931.3px;top:126px;width:126.6px;height:70.5px;overflow:hidden">
<svg width="126.6" height="70.5" viewBox="0 100 278 155" preserveAspectRatio="none" style="display:block"><use href="#photo"/>
</svg>
<svg class="a" style="left:108px;top:0" width="18" height="70"><g fill="#F8C8BC"><circle cx="2.8" cy="1.5" r="0.55"/><circle cx="2.3" cy="4.5" r="0.55"/><circle cx="2.7" cy="7.5" r="0.55"/><circle cx="2.5" cy="9.8" r="0.35"/><circle cx="2.9" cy="12.9" r="0.55"/><circle cx="2.6" cy="16.0" r="0.55"/><circle cx="2.6" cy="21.1" r="0.35"/><circle cx="2.8" cy="24.1" r="0.55"/><circle cx="2.1" cy="26.8" r="0.45"/><circle cx="2.9" cy="29.1" r="0.45"/><circle cx="2.5" cy="35.2" r="0.35"/><circle cx="2.4" cy="37.4" r="0.35"/><circle cx="2.8" cy="40.5" r="0.35"/><circle cx="2.5" cy="42.7" r="0.35"/><circle cx="2.6" cy="45.9" r="0.35"/><circle cx="2.2" cy="48.3" r="0.45"/><circle cx="2.7" cy="53.8" r="0.35"/><circle cx="2.2" cy="56.0" r="0.45"/><circle cx="2.9" cy="58.7" r="0.35"/><circle cx="2.2" cy="61.7" r="0.45"/><circle cx="2.8" cy="64.3" r="0.45"/><circle cx="2.3" cy="67.5" r="0.35"/><circle cx="4.8" cy="4.3" r="0.35"/><circle cx="5.3" cy="6.8" r="0.45"/><circle cx="5.1" cy="9.4" r="0.35"/><circle cx="5.1" cy="11.8" r="0.45"/><circle cx="4.7" cy="14.2" r="0.55"/><circle cx="5.3" cy="16.7" r="0.45"/><circle cx="4.7" cy="19.8" r="0.35"/><circle cx="5.4" cy="22.6" r="0.55"/><circle cx="4.6" cy="25.7" r="0.45"/><circle cx="4.8" cy="28.0" r="0.45"/><circle cx="5.0" cy="30.9" r="0.55"/><circle cx="5.0" cy="36.8" r="0.45"/><circle cx="4.8" cy="39.8" r="0.45"/><circle cx="4.8" cy="42.9" r="0.35"/><circle cx="4.8" cy="45.6" r="0.35"/><circle cx="5.4" cy="50.6" r="0.45"/><circle cx="5.4" cy="53.5" r="0.55"/><circle cx="5.4" cy="58.9" r="0.45"/><circle cx="4.7" cy="61.2" r="0.45"/><circle cx="4.7" cy="63.7" r="0.35"/><circle cx="5.2" cy="66.4" r="0.55"/><circle cx="8.5" cy="1.5" r="0.45"/><circle cx="8.5" cy="4.6" r="0.35"/><circle cx="7.9" cy="9.9" r="0.55"/><circle cx="8.5" cy="12.2" r="0.45"/><circle cx="8.4" cy="15.1" r="0.55"/><circle cx="7.9" cy="17.8" r="0.55"/><circle cx="7.9" cy="20.8" r="0.55"/><circle cx="8.1" cy="28.1" r="0.35"/><circle cx="8.3" cy="38.5" r="0.45"/><circle cx="8.5" cy="40.8" r="0.35"/><circle cx="8.0" cy="43.4" r="0.45"/><circle cx="8.4" cy="45.8" r="0.35"/><circle cx="7.9" cy="48.9" r="0.35"/><circle cx="8.2" cy="54.6" r="0.55"/><circle cx="8.5" cy="60.3" r="0.35"/><circle cx="8.0" cy="65.7" r="0.45"/><circle cx="8.1" cy="68.7" r="0.35"/><circle cx="11.1" cy="9.3" r="0.55"/><circle cx="10.8" cy="15.2" r="0.45"/><circle cx="10.8" cy="20.8" r="0.35"/><circle cx="11.3" cy="29.0" r="0.55"/><circle cx="10.8" cy="34.3" r="0.45"/><circle cx="11.1" cy="37.3" r="0.55"/><circle cx="11.3" cy="46.4" r="0.55"/><circle cx="11.4" cy="51.7" r="0.45"/><circle cx="11.3" cy="57.9" r="0.55"/><circle cx="10.9" cy="60.5" r="0.45"/><circle cx="10.8" cy="63.1" r="0.35"/><circle cx="10.7" cy="66.1" r="0.35"/></g></svg>
</div>
<div class="a" style="left:931.3px;top:208px;width:126.6px;height:71px;overflow:hidden">
<svg width="126.6" height="71" viewBox="0 100 278 155" preserveAspectRatio="none" style="display:block"><use href="#photo"/></svg>
<div class="a" style="left:7px;top:7px;width:114px;height:1px;background:#fff"></div>
<div class="a" style="left:7px;top:66px;width:114px;height:1px;background:rgba(255,255,255,0.55)"></div>
</div>
<div class="a" style="left:931.3px;top:290.7px;width:126.6px;height:70.7px;overflow:hidden">
<svg width="126.6" height="70.7" viewBox="0 100 278 155" preserveAspectRatio="none" style="display:block"><use href="#photo"/></svg>
<div class="a" style="left:0;top:0;width:127px;height:71px;background:rgba(210,120,220,0.35)"></div>
</div>
<div class="a" style="left:931.7px;top:373px;width:125.6px;height:69.8px;background:#fff;box-shadow:0 0 1px #bbb">
<svg class="a" style="left:2px;top:2px" width="121.6" height="65.8" viewBox="0 100 278 155" preserveAspectRatio="none"><use href="#photo"/></svg>
</div>
<div class="a" style="left:931.2px;top:455px;width:126.6px;height:71px;overflow:hidden">
<svg width="126.6" height="71" viewBox="0 100 278 155" preserveAspectRatio="none" style="display:block"><use href="#photo"/></svg>
<div class="a" style="left:7px;top:0;width:0.7px;height:71px;background:rgba(255,255,255,0.42)"></div>
<div class="a" style="left:119px;top:0;width:0.7px;height:71px;background:rgba(255,255,255,0.42)"></div>
<div class="a" style="left:0;top:6px;width:127px;height:0.7px;background:rgba(255,255,255,0.42)"></div>
<div class="a" style="left:0;top:66px;width:127px;height:0.7px;background:rgba(255,255,255,0.42)"></div>
</div>
<div class="a" style="left:931.2px;top:537.2px;width:126.6px;height:27.5px;overflow:hidden">
<svg width="126.6" height="71" viewBox="0 88 278 155" preserveAspectRatio="none" style="display:block"><use href="#photo"/></svg>
</div>
<!-- design pane separator -->
<div class="a" style="left:919px;top:89px;width:1px;height:484px;background:#D0D0D0"></div>
<div id="status" class="a"></div>
<div class="t" style="left:5px;top:576.5px;font-size:6.3px;color:#222">Slide 1 of 1</div>
<svg class="a" style="left:44px;top:574px" width="14" height="11" fill="none" stroke="#555" stroke-width="0.7">
<path d="M4.5,2.5 v6 h5 M4.5,2.5 h4 M9.5,5 v3.5"/>
<path d="M10,2 l1.5,1.5 M10,4 l1.5,-1"/>
</svg>
<svg class="a" style="left:780px;top:573px" width="300" height="13" fill="none" stroke="#555" stroke-width="0.8">
<path d="M9,4 l2,-1.5 l2,1.5 M9,6.5 h4 M9,8.5 h4"/>
<path d="M46.5,3 h7 v5 h-4 l-2,2 v-2 h-1 z" fill="#555" stroke="none"/>
<rect x="97.5" y="0" width="21" height="13" fill="#C9C9C9" stroke="none"/>
<rect x="104.5" y="3" width="7" height="7"/>
<path d="M106,5.5 h4" stroke-width="1.2"/>
<path d="M106.5,11 h6 v-6"/>
<rect x="126.5" y="3" width="3" height="3"/><rect x="131.5" y="3" width="3" height="3"/>
<rect x="126.5" y="8" width="3" height="2.5"/><rect x="131.5" y="8" width="3" height="2.5"/>
<path d="M149.5,3 v7 h3.5 v-7 z M153,3 h3.5 v7 H153"/>
<path d="M171,3.5 h8 v5 h-8 z M175,8.5 v2 M173,10.5 h4"/>
<path d="M190,6.5 h3" />
<path d="M197,6.5 h60" stroke="#9A9A9A" stroke-width="0.6"/>
<rect x="225" y="3" width="2" height="7" fill="#555" stroke="none"/>
<path d="M257,6.5 h4 M259,4.5 v4"/>
<rect x="292.5" y="2.5" width="7" height="7"/>
<path d="M293,3 l2,2 M299,3 l-2,2 M293,9 l2,-2 M299,9 l-2,-2" stroke-width="0.6"/>
</svg>
<div class="t" style="left:798px;top:576.5px;font-size:6.3px;color:#222">Notes</div>
<div class="t" style="left:835px;top:576.5px;font-size:6.3px;color:#222">Comments</div>
<div class="t" style="left:1049px;top:576.5px;font-size:6.3px;color:#222">103%</div>
</body></html>
